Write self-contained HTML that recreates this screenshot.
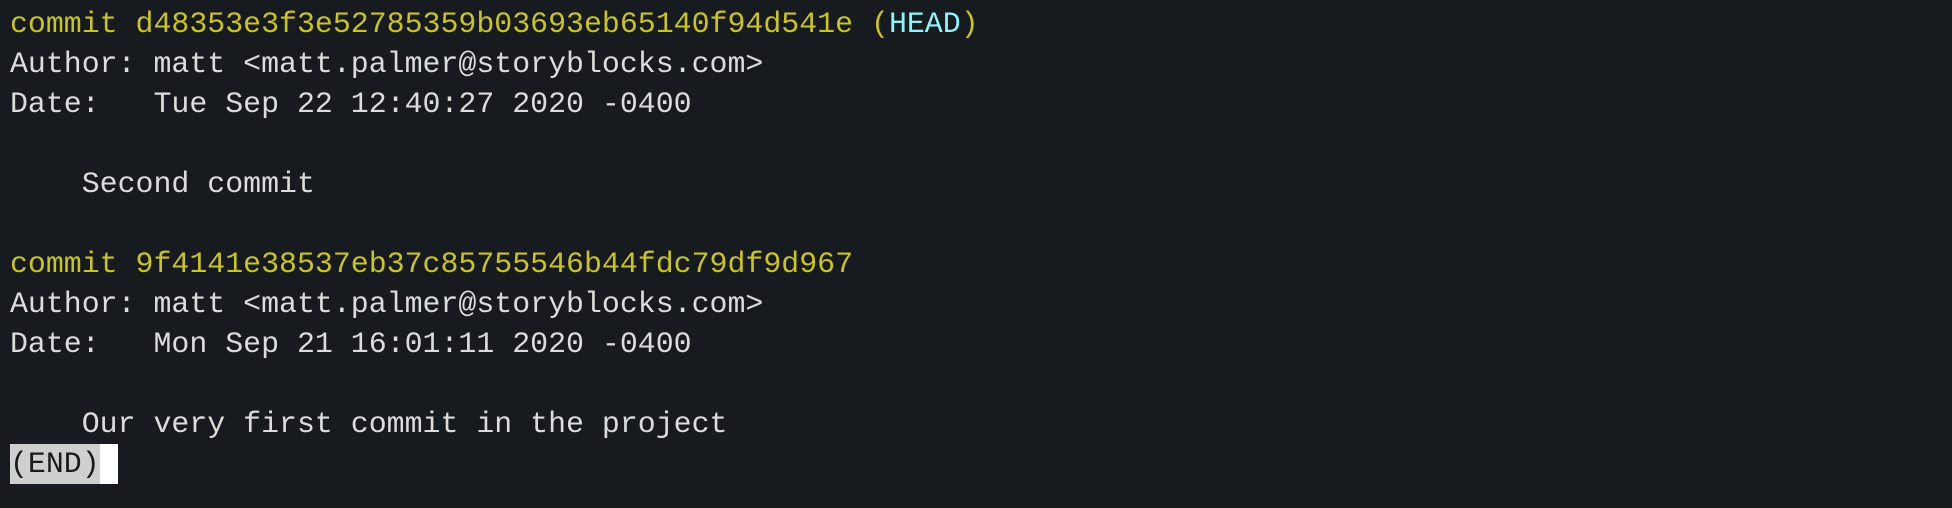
<!DOCTYPE html>
<html><head><meta charset="utf-8"><style>
html,body{margin:0;padding:0;background:#171a1f;width:1952px;height:508px;overflow:hidden}
pre{margin:0;position:absolute;left:10px;top:4px;font-family:"Liberation Mono",monospace;font-size:29.9px;line-height:40px;color:#dcdcdc;white-space:pre}
.y{color:#c9c32b}.c{color:#8ff3f7}
.end{background:#cfcfcf;color:#1a1a1a;display:inline-block;height:40px;vertical-align:top}
.cur{background:#fff;display:inline-block;width:18px;height:40px;vertical-align:top}
</style></head><body>
<pre><span class="y">commit d48353e3f3e52785359b03693eb65140f94d541e (<span class="c">HEAD</span>)</span>
Author: matt &lt;matt.palmer@storyblocks.com&gt;
Date:   Tue Sep 22 12:40:27 2020 -0400

    Second commit

<span class="y">commit 9f4141e38537eb37c85755546b44fdc79df9d967</span>
Author: matt &lt;matt.palmer@storyblocks.com&gt;
Date:   Mon Sep 21 16:01:11 2020 -0400

    Our very first commit in the project
<span class="end">(END)</span><span class="cur"></span></pre>
</body></html>
